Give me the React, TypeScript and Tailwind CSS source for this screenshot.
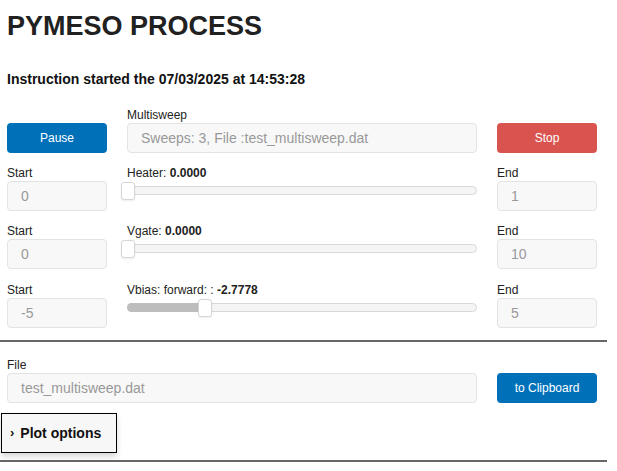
import React from "react"

const font = { fontFamily: '"Liberation Sans", Arial, sans-serif' }

const Label = ({ children }: { children?: React.ReactNode }) => (
  <div className="h-[18px] pt-[3px] text-[12px] leading-[15px] text-[#222]">{children}</div>
)

const Field = ({ value, className = "" }: { value: string; className?: string }) => (
  <div
    className={
      "flex h-[30px] items-center rounded-[4px] border border-[#e3e3e3] bg-[#f8f8f8] px-[13px] text-[14px] text-[#999] " +
      className
    }
  >
    {value}
  </div>
)

const Button = ({ text, color }: { text: string; color: string }) => (
  <div
    className={
      "flex h-[30px] items-center justify-center rounded-[4px] text-[12px] text-white " + color
    }
  >
    {text}
  </div>
)

const Slider = ({ pct }: { pct: number }) => (
  <div className="relative mt-[5px] h-[9px] rounded-full border border-[#d8d8d8] bg-[#f5f5f5]">
    <div
      className="absolute -top-px -left-px h-[9px] rounded-l-full bg-[#bdbdbd]"
      style={{ width: `${pct}%` }}
    />
    <div
      className="absolute top-[-5px] h-[18px] w-[14px] -translate-x-1/2 rounded-[3px] border border-[#d6d6d6] bg-white shadow-[0_1px_2px_rgba(0,0,0,0.08)]"
      style={{ left: `${pct}%` }}
    />
  </div>
)

const SweepRow = ({
  start,
  end,
  name,
  value,
  pct,
  className = "mt-[10px]",
}: {
  start: string
  end: string
  name: string
  value: string
  pct: number
  className?: string
}) => (
  <div className={"grid grid-cols-[100px_350px_100px] gap-x-5 " + className}>
    <div>
      <Label>Start</Label>
      <Field value={start} />
    </div>
    <div>
      <Label>
        {name} <b>{value}</b>
      </Label>
      <Slider pct={pct} />
    </div>
    <div>
      <Label>End</Label>
      <Field value={end} />
    </div>
  </div>
)

export default function App() {
  return (
    <div className="h-[471px] w-[617px] overflow-hidden bg-white text-[#222]" style={font}>
      <div className="px-[7px]">
        <h1 className="pt-[10px] text-[27px] leading-[32px] font-bold text-[#212121]">
          PYMESO PROCESS
        </h1>
        <p className="mt-[27px] text-[14px] leading-[20px] font-bold text-[#111]">
          Instruction started the 07/03/2025 at 14:53:28
        </p>

        <div className="mt-[16px] grid grid-cols-[100px_350px_100px] gap-x-5">
          <div>
            <Label />
            <Button text="Pause" color="bg-[#0071b9]" />
          </div>
          <div>
            <Label>Multisweep</Label>
            <Field value="Sweeps: 3, File :test_multisweep.dat" />
          </div>
          <div>
            <Label />
            <Button text="Stop" color="bg-[#d9534f]" />
          </div>
        </div>

        <SweepRow start="0" end="1" name="Heater:" value="0.0000" pct={0} />
        <SweepRow start="0" end="10" name="Vgate:" value="0.0000" pct={0} />
        <SweepRow
          start="-5"
          end="5"
          name="Vbias: forward: :"
          value="-2.7778"
          pct={22.2}
          className="mt-[11px]"
        />
      </div>

      <hr className="mt-[12px] w-[607px] border-t-2 border-[#666]" />

      <div className="px-[7px]">
        <div className="mt-[13px] grid grid-cols-[470px_100px] gap-x-5">
          <div>
            <Label>File</Label>
            <Field value="test_multisweep.dat" />
          </div>
          <div>
            <Label />
            <Button text="to Clipboard" color="bg-[#0071b9]" />
          </div>
        </div>
      </div>

      <div className="mt-[10px] ml-px flex h-[40px] w-[116px] items-center gap-[6px] border border-black bg-[#f7f7f7] pl-[8px] text-[14px] font-bold text-[#111] shadow-[0_4px_6px_rgba(0,0,0,0.15)]">
        <span className="text-[13px]">›</span>
        <span>Plot options</span>
      </div>

      <hr className="mt-[7px] w-[607px] border-t-2 border-[#666]" />
    </div>
  )
}
